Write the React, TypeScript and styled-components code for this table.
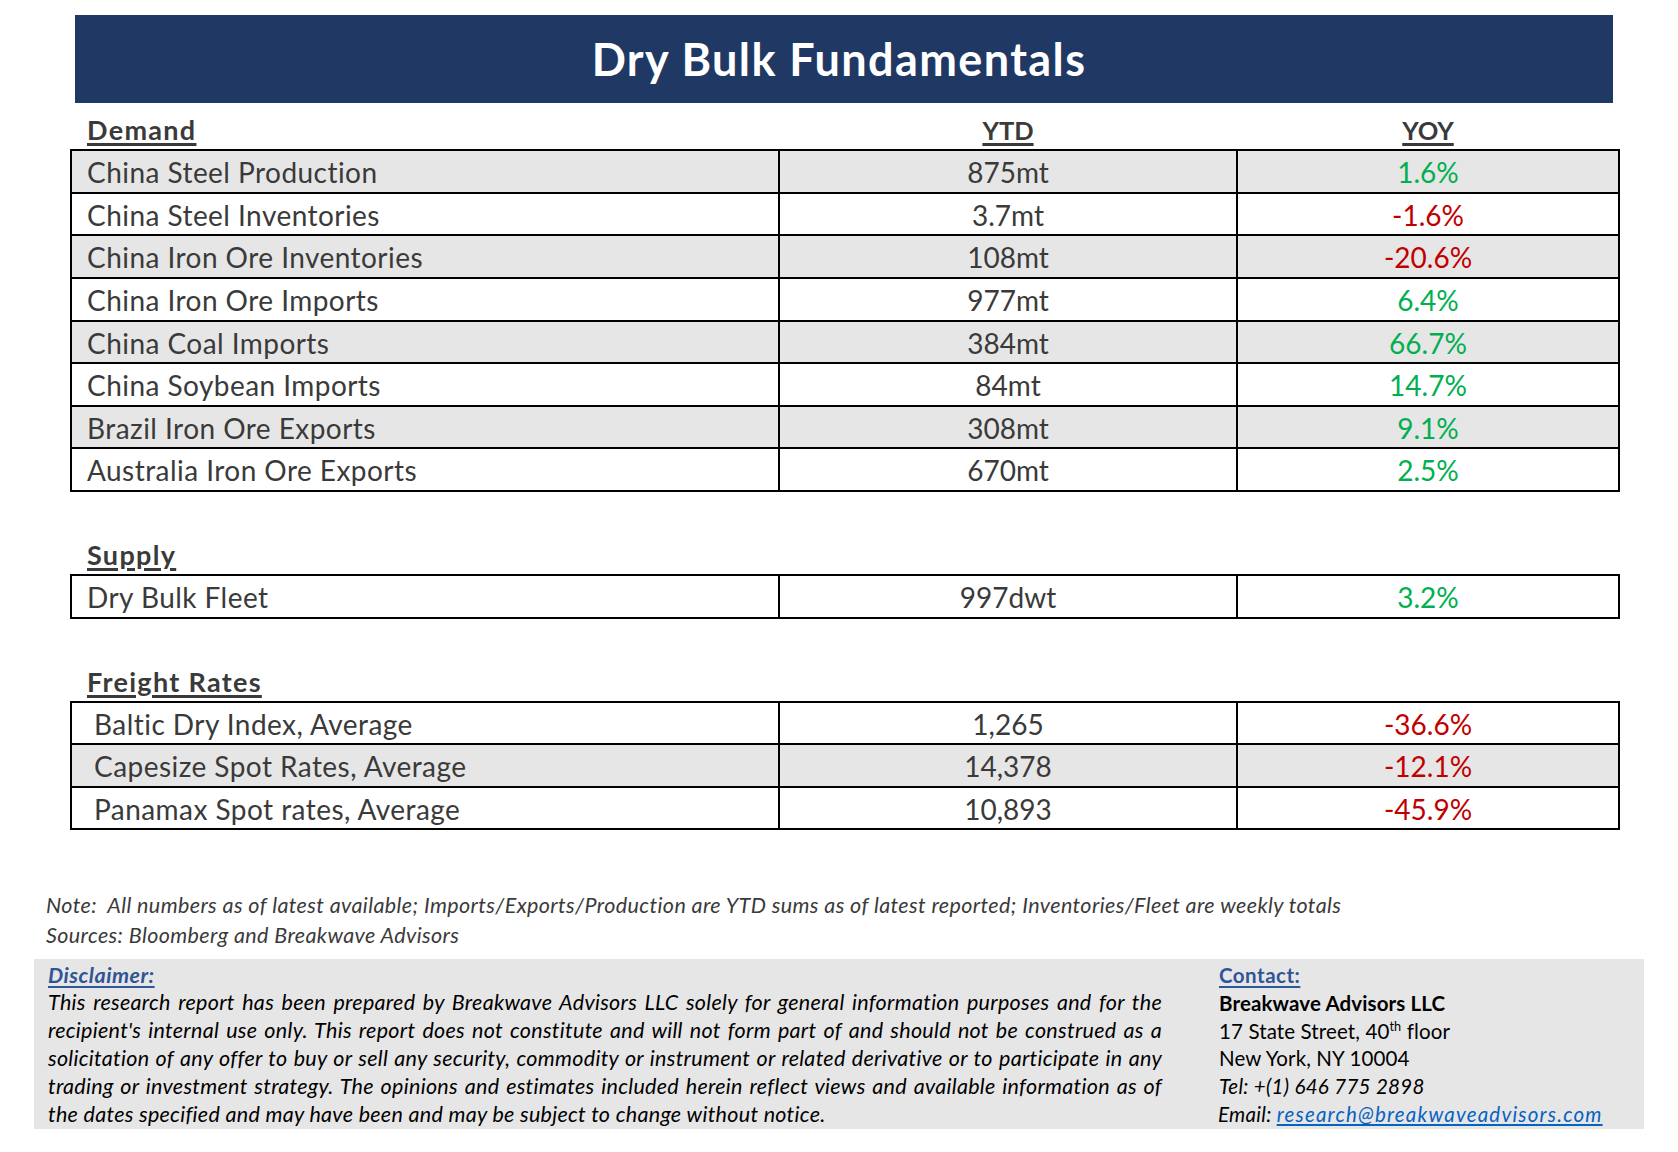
import React from "react";
import styled, { createGlobalStyle } from "styled-components";

const GlobalStyle = createGlobalStyle`
  html, body {
    margin: 0;
    padding: 0;
    background: #ffffff;
  }
  body {
    font-family: Lato, "Open Sans", "Liberation Sans", sans-serif;
    color: #3a3a3a;
  }
`;

const COLS = "706px 458px 382px";

const Page = styled.div`
  width: 1678px;
  padding-top: 15px;
  padding-bottom: 24px;
`;

const Banner = styled.header`
  margin-left: 75px;
  width: 1538px;
  height: 88px;
  background: #203864;
  display: flex;
  align-items: center;
  justify-content: center;
  padding-right: 10px;
  box-sizing: border-box;
`;

const BannerTitle = styled.h1`
  margin: 0;
  font-family: Lato, "Open Sans", sans-serif;
  font-weight: 700;
  font-size: 45px;
  color: #ffffff;
  letter-spacing: 1.4px;
`;

const Section = styled.section<{ $top: number }>`
  margin-top: ${(p) => p.$top}px;
  margin-left: 70px;
  width: 1550px;
`;

const SectionHead = styled.div`
  display: grid;
  grid-template-columns: ${COLS};
  padding: 0 2px;
  height: 30px;
  margin-bottom: 4px;
`;

const HeadCell = styled.div<{ $align: "left" | "center" }>`
  text-align: ${(p) => p.$align};
  padding-left: ${(p) => (p.$align === "left" ? "15px" : "0")};
  border-left: ${(p) => (p.$align === "center" ? "2px solid transparent" : "0")};
  line-height: 30px;
  white-space: nowrap;
`;

const HeadText = styled.span<{ $wide?: boolean }>`
  font-weight: 700;
  font-size: ${(p) => (p.$wide ? "27px" : "25.5px")};
  letter-spacing: ${(p) => (p.$wide ? "1.3px" : "0")};
  color: #3a3a3a;
  text-decoration: underline;
  text-decoration-thickness: 2.6px;
  text-underline-offset: 3px;
`;

const Table = styled.div`
  border: 2px solid #000;
`;

const Row = styled.div<{ $striped: boolean }>`
  display: grid;
  grid-template-columns: ${COLS};
  height: 40.6px;
  background: ${(p) => (p.$striped ? "#e7e6e6" : "#ffffff")};
  & + & {
    border-top: 2px solid #000;
  }
`;

const LabelCell = styled.div<{ $indent: boolean }>`
  font-size: 28px;
  line-height: 40.6px;
  padding-top: 1px;
  padding-left: ${(p) => (p.$indent ? "22px" : "15px")};
  letter-spacing: 0.45px;
  color: #3a3a3a;
  white-space: nowrap;
`;

const ValueCell = styled.div`
  font-size: 28px;
  line-height: 40.6px;
  padding-top: 1px;
  text-align: center;
  border-left: 2px solid #000;
  color: #3a3a3a;
`;

const ChangeCell = styled(ValueCell)<{ $tone: "up" | "down" }>`
  color: ${(p) => (p.$tone === "up" ? "#00b050" : "#c00000")};
`;

const NoteBlock = styled.div`
  margin-top: 59.6px;
  margin-left: 46px;
`;

const NoteLine = styled.div`
  font-style: italic;
  font-size: 21.5px;
  letter-spacing: 0.4px;
  line-height: 30px;
  color: #3a3a3a;
  white-space: pre;
`;

const InfoBox = styled.div`
  margin-top: 8.5px;
  margin-left: 34px;
  width: 1610px;
  background: #e7e6e6;
  display: flex;
  gap: 57px;
  padding: 2px 0 0 14px;
  box-sizing: border-box;
  font-size: 21.5px;
  line-height: 27.8px;
  color: #000;
`;

const DisclaimerCol = styled.div`
  width: 1114px;
  flex: none;
  padding-top: 1px;
`;

const BoxTitle = styled.div<{ $italic?: boolean }>`
  font-weight: 700;
  font-style: ${(p) => (p.$italic ? "italic" : "normal")};
  letter-spacing: 0.5px;
  color: #2f5597;
  span {
    text-decoration: underline;
    text-decoration-thickness: 2px;
    text-underline-offset: 3px;
  }
`;

const DisclaimerLine = styled.div<{ $last?: boolean }>`
  font-style: italic;
  letter-spacing: 0.3px;
  text-align: ${(p) => (p.$last ? "left" : "justify")};
  text-align-last: ${(p) => (p.$last ? "left" : "justify")};
  white-space: nowrap;
`;

const ContactCol = styled.div`
  flex: none;
  font-size: 20.5px;
  padding-top: 1.5px;
`;

const ContactLine = styled.div<{ $bold?: boolean; $italic?: boolean; $shift?: boolean }>`
  font-weight: ${(p) => (p.$bold ? 700 : 400)};
  font-style: ${(p) => (p.$italic ? "italic" : "normal")};
  letter-spacing: ${(p) => (p.$italic ? "0.3px" : "0.12px")};
  margin-left: ${(p) => (p.$shift ? "-1px" : "0")};
  white-space: nowrap;
  sup {
    font-size: 0.62em;
    line-height: 0;
    vertical-align: 0.62em;
  }
`;

const MailLink = styled.a`
  color: #0563c1;
  letter-spacing: 1.2px;
  text-decoration: underline;
  text-underline-offset: 2px;
`;

type Item = { label: string; ytd: string; yoy: string };

const demand: Item[] = [
  { label: "China Steel Production", ytd: "875mt", yoy: "1.6%" },
  { label: "China Steel Inventories", ytd: "3.7mt", yoy: "-1.6%" },
  { label: "China Iron Ore Inventories", ytd: "108mt", yoy: "-20.6%" },
  { label: "China Iron Ore Imports", ytd: "977mt", yoy: "6.4%" },
  { label: "China Coal Imports", ytd: "384mt", yoy: "66.7%" },
  { label: "China Soybean Imports", ytd: "84mt", yoy: "14.7%" },
  { label: "Brazil Iron Ore Exports", ytd: "308mt", yoy: "9.1%" },
  { label: "Australia Iron Ore Exports", ytd: "670mt", yoy: "2.5%" },
];

const supply: Item[] = [{ label: "Dry Bulk Fleet", ytd: "997dwt", yoy: "3.2%" }];

const freight: Item[] = [
  { label: "Baltic Dry Index, Average", ytd: "1,265", yoy: "-36.6%" },
  { label: "Capesize Spot Rates, Average", ytd: "14,378", yoy: "-12.1%" },
  { label: "Panamax Spot rates, Average", ytd: "10,893", yoy: "-45.9%" },
];

const disclaimerLines = [
  "This research report has been prepared by Breakwave Advisors LLC solely for general information purposes and for the",
  "recipient's internal use only. This report does not constitute and will not form part of and should not be construed as a",
  "solicitation of any offer to buy or sell any security, commodity or instrument or related derivative or to participate in any",
  "trading or investment strategy. The opinions and estimates included herein reflect views and available information as of",
  "the dates specified and may have been and may be subject to change without notice.",
];

type BlockProps = {
  title: string;
  items: Item[];
  top: number;
  showCols?: boolean;
  stripeOdd?: boolean;
  indent?: boolean;
};

function DataBlock({ title, items, top, showCols, stripeOdd, indent }: BlockProps) {
  return (
    <Section $top={top}>
      <SectionHead>
        <HeadCell $align="left">
          <HeadText $wide>{title}</HeadText>
        </HeadCell>
        <HeadCell $align="center">{showCols && <HeadText>YTD</HeadText>}</HeadCell>
        <HeadCell $align="center">{showCols && <HeadText>YOY</HeadText>}</HeadCell>
      </SectionHead>
      <Table>
        {items.map((it, i) => (
          <Row key={it.label} $striped={stripeOdd ? i % 2 === 1 : i % 2 === 0}>
            <LabelCell $indent={!!indent}>{it.label}</LabelCell>
            <ValueCell>{it.ytd}</ValueCell>
            <ChangeCell $tone={it.yoy.startsWith("-") ? "down" : "up"}>{it.yoy}</ChangeCell>
          </Row>
        ))}
      </Table>
    </Section>
  );
}

export default function App() {
  return (
    <>
      <GlobalStyle />
      <Page>
        <Banner>
          <BannerTitle>Dry Bulk Fundamentals</BannerTitle>
        </Banner>

        <DataBlock title="Demand" items={demand} top={12.3} showCols />
        <DataBlock title="Supply" items={supply} top={48} stripeOdd />
        <DataBlock title="Freight Rates" items={freight} top={48} stripeOdd indent />

        <NoteBlock>
          <NoteLine>
            {"Note:  All numbers as of latest available; Imports/Exports/Production are YTD sums as of latest reported; Inventories/Fleet are weekly totals"}
          </NoteLine>
          <NoteLine>Sources: Bloomberg and Breakwave Advisors</NoteLine>
        </NoteBlock>

        <InfoBox>
          <DisclaimerCol>
            <BoxTitle $italic>
              <span>Disclaimer:</span>
            </BoxTitle>
            {disclaimerLines.map((l, i) => (
              <DisclaimerLine key={i} $last={i === disclaimerLines.length - 1}>
                {l}
              </DisclaimerLine>
            ))}
          </DisclaimerCol>
          <ContactCol>
            <BoxTitle>
              <span>Contact:</span>
            </BoxTitle>
            <ContactLine $bold>Breakwave Advisors LLC</ContactLine>
            <ContactLine>
              17 State Street, 40<sup>th</sup> floor
            </ContactLine>
            <ContactLine>New York, NY 10004</ContactLine>
            <ContactLine $italic>Tel: +(1) 646 775 2898</ContactLine>
            <ContactLine $italic $shift>
              Email: <MailLink href="mailto:research@breakwaveadvisors.com">research@breakwaveadvisors.com</MailLink>
            </ContactLine>
          </ContactCol>
        </InfoBox>
      </Page>
    </>
  );
}
